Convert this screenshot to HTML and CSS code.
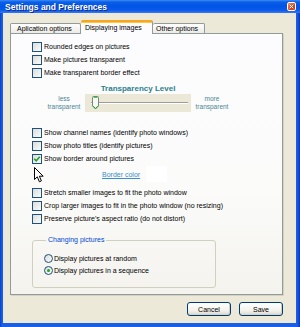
FILE: index.html
```html
<!DOCTYPE html>
<html>
<head>
<meta charset="utf-8">
<link rel="stylesheet" href="styles.css">
</head>
<body>
<div class="window">
  <div class="titlebar">
    <span class="title">Settings and Preferences</span>
    <span class="close"><svg width="7" height="7" viewBox="0 0 7 7"><path d="M1 1L6 6M6 1L1 6" stroke="#fff" stroke-width="1.4"/></svg></span>
  </div>
  <div class="client">
    <div class="tabs">
      <div class="tab t1">Aplication options</div>
      <div class="tab t2 active">Displaying images</div>
      <div class="tab t3">Other options</div>
    </div>
    <div class="panel">
      <div class="check"><span class="box"></span>Rounded edges on pictures</div>
      <div class="check"><span class="box"></span>Make pictures transparent</div>
      <div class="check"><span class="box"></span>Make transparent border effect</div>

      <div class="slider">
        <div class="slider-title">Transparency Level</div>
        <div class="slabel">less<br>transparent</div>
        <div class="track-box">
          <div class="track"></div>
          <svg class="thumb" width="7" height="14" viewBox="0 0 7 14"><path d="M0.5 1.5Q0.5 0.5 1.5 0.5H5.5Q6.5 0.5 6.5 1.5V10L3.5 13L0.5 10Z" fill="#f7f7f4" stroke="#6f8f7c"/><path d="M1.2 10.2L3.5 12.4L5.8 10.2" fill="none" stroke="#21a121" stroke-width="1"/><path d="M1.5 1.2H5.5" stroke="#21a121"/></svg>
        </div>
        <div class="slabel">more<br>transparent</div>
      </div>

      <div class="check gap14"><span class="box"></span>Show channel names (identify photo windows)</div>
      <div class="check"><span class="box"></span>Show photo titles (identify pictures)</div>
      <div class="check"><span class="box checked"><svg width="8" height="8" viewBox="0 0 8 8"><path d="M1.2 3.8L3.2 5.8L6.8 1.8" fill="none" stroke="#21a121" stroke-width="1.6"/></svg></span>Show border around pictures</div>
      <div class="color-row"><a class="link">Border color</a><span class="swatch"></span></div>
      <div class="check gap4"><span class="box"></span>Stretch smaller images to fit the photo window</div>
      <div class="check"><span class="box"></span>Crop larger images to fit in the photo window (no resizing)</div>
      <div class="check"><span class="box"></span>Preserve picture's aspect ratio (do not distort)</div>

      <fieldset class="group">
        <legend>Changing pictures</legend>
        <div class="radio"><span class="circle"></span>Display pictures at random</div>
        <div class="radio"><span class="circle on"></span>Display pictures in a sequence</div>
      </fieldset>

      <svg class="cursor" width="11" height="17" viewBox="0 0 11 17"><path d="M0.5 0.5V12.5L3.3 9.8L5.4 14.8L7.4 13.9L5.4 9.2H9.2Z" fill="#fff" stroke="#000" stroke-linejoin="round"/></svg>
    </div>
    <div class="buttons">
      <button class="btn">Cancel</button>
      <button class="btn">Save</button>
    </div>
  </div>
</div>
</body>
</html>
```

FILE: styles.css
```css
* { box-sizing: border-box; }
html, body { margin: 0; padding: 0; }
body {
  width: 300px;
  height: 327px;
  font-family: "Liberation Sans", Arial, sans-serif;
  font-size: 7px;
  color: #000;
  background: #0a4fd6;
}
.window {
  width: 300px;
  height: 327px;
  display: flex;
  flex-direction: column;
  padding: 0 4px 4px 3px;
  background: linear-gradient(90deg, #0841c9 0, #1a5ee6 2px, #1a5ee6 297px, #0838b8 300px);
}
.titlebar {
  height: 13px;
  margin: 0 -4px 0 -3px;
  padding: 0 4px 0 5px;
  display: flex;
  align-items: center;
  justify-content: space-between;
  background: linear-gradient(#3f8cf3 0, #0b5fe6 2px, #0055e5 6px, #0a58ea 10px, #2a6df0 12px, #3a78f0 13px);
}
.title {
  color: #fff;
  font-weight: bold;
  font-size: 8.5px;
  letter-spacing: 0;
  text-shadow: 1px 1px 0 #0a2a8a;
}
.close {
  width: 9px;
  height: 9px;
  border: 1px solid #fff;
  border-radius: 2px;
  background: linear-gradient(135deg, #e98a6c, #d44a21 60%, #c13a14);
  display: flex;
  align-items: center;
  justify-content: center;
}
.close svg { width: 5px; height: 5px; }
.client {
  flex: 1;
  background: #ece9d8;
  padding: 7px 13px 0 7px;
  display: flex;
  flex-direction: column;
}
.tabs {
  display: flex;
  align-items: flex-end;
  height: 13px;
  position: relative;
  z-index: 1;
}
.tab {
  height: 10px;
  line-height: 9px;
  padding: 0 0 0 6px;
  border: 1px solid #919b9c;
  border-bottom: none;
  border-radius: 2px 2px 0 0;
  background: linear-gradient(#fefefe, #ecebe6);
  white-space: nowrap;
}
.t1 { width: 71px; }
.t2 { width: 72px; }
.t3 { width: 52px; padding-left: 3px; border-left: none; }
.tab.active {
  height: 14px;
  margin-bottom: -1px;
  background: #fcfcfe;
  border-top: 2px solid #f5a623;
  box-shadow: inset 0 1px 0 #ffc83c;
  line-height: 11px;
  padding-left: 4px;
  border-left: none;
}
.panel {
  position: relative;
  border: 1px solid #919b9c;
  background: linear-gradient(#fcfcfe 0, #fbfbfa 60%, #f4f3ee 100%);
  box-shadow: 1px 1px 0 #d5d2c3;
  padding: 6px 0 6px 21px;
}
.check {
  height: 13px;
  display: flex;
  align-items: center;
  white-space: nowrap;
}
.box {
  width: 10px;
  height: 10px;
  border: 1px solid #1c5180;
  background: linear-gradient(135deg, #dcdcd7, #fbfbf9);
  margin-right: 2px;
  display: flex;
  align-items: center;
  justify-content: center;
  flex: none;
}
.gap14 { margin-top: 14px; }
.gap4 { margin-top: 4px; }
.slider {
  display: grid;
  grid-template-columns: 40px 106px 40px;
  column-gap: 1px;
  margin: 5px 0 0 12px;
}
.slider-title {
  grid-column: 2;
  text-align: center;
  color: #2b7f8e;
  font-weight: bold;
  font-size: 8px;
  line-height: 10px;
}
.slabel {
  grid-row: 2;
  align-self: center;
  text-align: center;
  color: #4c8595;
  font-size: 6.5px;
  line-height: 8px;
}
.slabel:last-child { grid-column: 3; }
.track-box {
  grid-row: 2;
  grid-column: 2;
  height: 18px;
  background: #ebe8d8;
  display: flex;
  align-items: center;
  padding: 0 3px 0 6px;
  position: relative;
}
.track {
  flex: 1;
  height: 2px;
  border-top: 1px solid #9d9c99;
  border-bottom: 1px solid #fff;
}
.thumb {
  position: absolute;
  left: 7px;
  top: 2px;
}
.color-row {
  height: 16px;
  margin-top: 1px;
  display: flex;
  align-items: center;
  padding-left: 70px;
}
.link {
  color: #3a8fc8;
  text-decoration: underline;
}
.swatch {
  width: 21px;
  height: 16px;
  margin-left: 6px;
  background: #fff;
}
.group {
  margin: 10px 0 0 0;
  width: 184px;
  padding: 7px 0 11px 11px;
  border: 1px solid #d0d0bf;
  border-radius: 3px;
}
.group legend {
  color: #0046d5;
  padding: 0 2px;
  margin-left: 2px;
  line-height: 10px;
  font-size: 7px;
}
.radio {
  height: 12px;
  display: flex;
  align-items: center;
  white-space: nowrap;
}
.circle {
  width: 9px;
  height: 9px;
  border: 1px solid #1c5180;
  border-radius: 50%;
  background: linear-gradient(135deg, #dcdcd7, #fbfbf9);
  margin-right: 1px;
  display: flex;
  align-items: center;
  justify-content: center;
}
.circle.on::after {
  content: "";
  width: 3px;
  height: 3px;
  border-radius: 50%;
  background: #21a121;
}
.cursor {
  position: absolute;
  left: 23px;
  top: 133px;
}
.buttons {
  display: flex;
  justify-content: flex-end;
  gap: 8px;
  margin-top: 7px;
}
.btn {
  width: 44px;
  height: 14px;
  padding: 0;
  font-family: "Liberation Sans", Arial, sans-serif;
  font-size: 7px;
  color: #000;
  border: 1px solid #003c74;
  border-radius: 3px;
  background: linear-gradient(#ffffff, #f4f3ee 60%, #dcd8cc);
  box-shadow: inset -1px -1px 0 #d6d0c5;
}
```
